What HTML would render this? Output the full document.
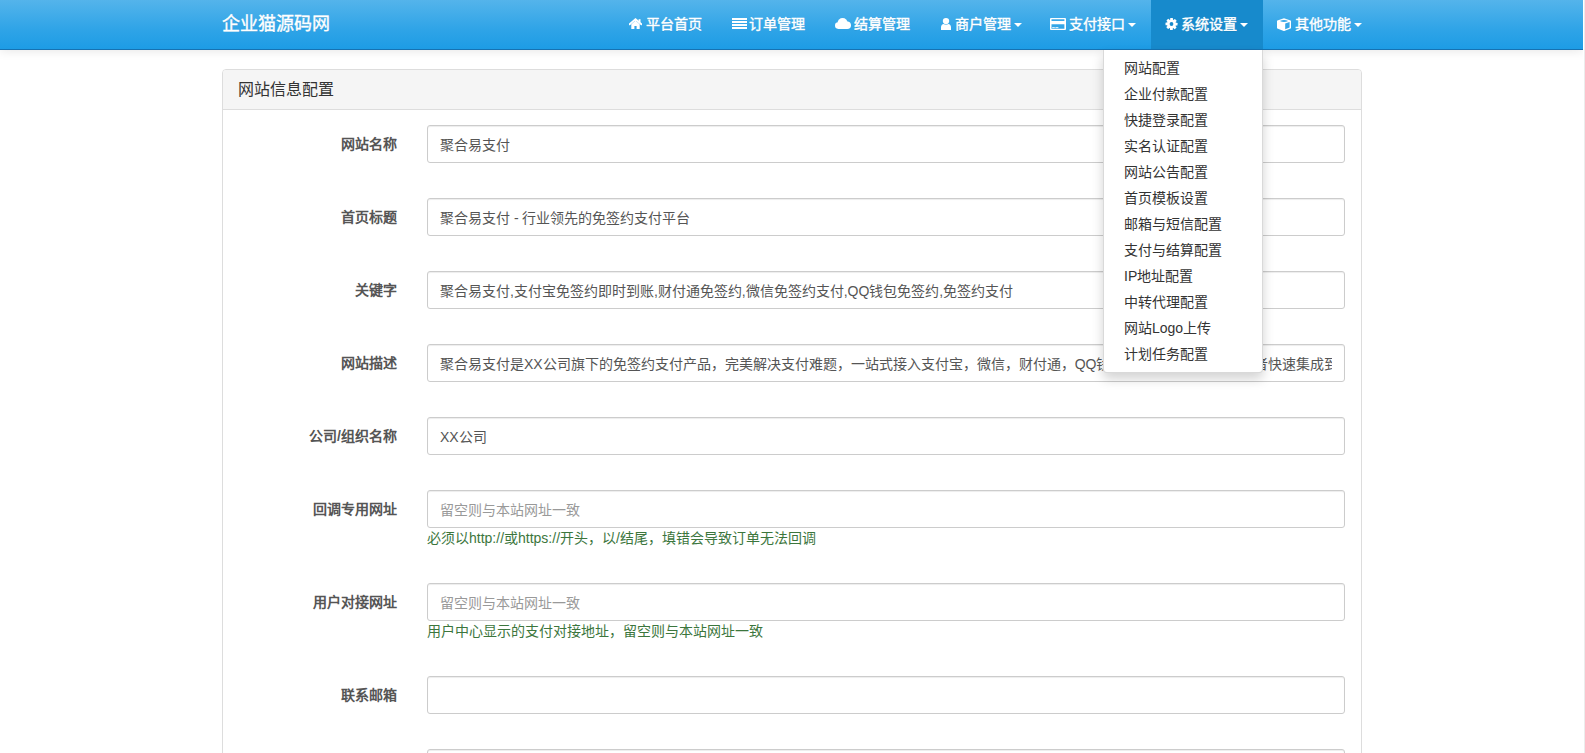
<!DOCTYPE html>
<html lang="zh-CN"><head><meta charset="utf-8">
<style>
*{box-sizing:border-box;margin:0;padding:0}
html,body{width:1585px;height:753px;overflow:hidden;background:#fff}
body{font-family:"Liberation Sans",sans-serif;font-size:14px;line-height:20px;color:#555;position:relative}
.nav{position:absolute;left:0;top:0;width:1583px;height:50px;background:linear-gradient(#54b4eb,#2fa4e7 60%,#1d9ce5);border-bottom:1px solid #1672b2;box-shadow:0 1px 10px rgba(0,0,0,.1);z-index:5}
.brand{position:absolute;left:222px;top:13.5px;font-size:18px;line-height:20px;color:#fff;text-shadow:0 1px 0 rgba(0,0,0,.1);-webkit-text-stroke:.35px #fff;white-space:nowrap}
.act{position:absolute;left:1151px;top:0;width:112px;height:49px;background:#178acc}
.nt{position:absolute;top:13.5px;line-height:20px;color:#fff;white-space:nowrap;text-shadow:0 1px 0 rgba(0,0,0,.1);-webkit-text-stroke:.4px #fff}
.car{position:absolute;top:22.5px;width:0;height:0;border-top:4px solid #fff;border-left:4px solid transparent;border-right:4px solid transparent}
svg.i{position:absolute;fill:#fff}
.panel{position:absolute;left:222px;top:69px;width:1140px;height:700px;border:1px solid #ddd;border-radius:4px;background:#fff}
.ph{height:40px;background:#f5f5f5;border-bottom:1px solid #ddd;padding:9px 15px;color:#333;font-size:16px;line-height:22px;border-radius:3px 3px 0 0}
.lbl{position:absolute;left:223px;width:174px;text-align:right;font-weight:bold;color:#555;line-height:20px}
.inp{position:absolute;left:427px;width:918px;height:38px;border:1px solid #ccc;border-radius:3px;padding:10px 12px 0;line-height:19px;color:#555;white-space:nowrap;overflow:hidden;box-shadow:inset 0 1px 1px rgba(0,0,0,.075);background:#fff}
.ph2{color:#999}
.help{position:absolute;left:427px;color:#3c763d;line-height:20px}
.dd{position:absolute;left:1103px;top:50px;width:160px;height:323px;background:#fff;border:1px solid rgba(0,0,0,.15);border-top:0;border-radius:0 0 4px 4px;box-shadow:0 6px 12px rgba(0,0,0,.175);padding:5px 0;z-index:6}
.dd div{padding:3px 20px;line-height:20px;color:#333;white-space:nowrap}
.sb{position:absolute;right:0;top:0;width:1px;height:753px;background:#ececec;z-index:9}.sb2{position:absolute;right:1px;top:0;width:1px;height:753px;background:#fff;z-index:9}
</style></head><body>
<div class="nav">
  <div class="brand">企业猫源码网</div>
  <div class="act"></div>
  <!-- home -->
  <svg class="i" style="left:629px;top:18px" width="13" height="11" viewBox="0 0 13 11"><path d="M0.6 6.2 L6.5 1.1 L12.4 6.2" fill="none" stroke="#fff" stroke-width="1.9" stroke-linecap="round" stroke-linejoin="round"/><rect x="9.6" y="1.2" width="1.9" height="3.4"/><path d="M2.3 6.2 L6.5 2.6 L10.7 6.2 V11 H7.6 V7.9 H5.4 V11 H2.3 Z"/></svg>
  <div class="nt" style="left:646px">平台首页</div>
  <!-- list -->
  <svg class="i" style="left:732px;top:18px" width="15" height="11" viewBox="0 0 15 11"><rect x="0" y="0" width="15" height="2"/><rect x="0" y="3" width="15" height="2"/><rect x="0" y="6" width="15" height="2"/><rect x="0" y="9" width="15" height="2"/></svg>
  <div class="nt" style="left:749px">订单管理</div>
  <!-- cloud -->
  <svg class="i" style="left:835px;top:18px" width="16" height="11" viewBox="0 0 16 11"><circle cx="3.3" cy="7.6" r="3.3"/><circle cx="7.6" cy="5" r="5"/><circle cx="12.2" cy="7.2" r="3.8"/><rect x="3.3" y="6" width="8.9" height="5"/></svg>
  <div class="nt" style="left:854px">结算管理</div>
  <!-- user -->
  <svg class="i" style="left:941px;top:18px" width="10" height="12" viewBox="0 0 10 12"><ellipse cx="5" cy="3.1" rx="3.2" ry="3.1"/><path d="M0 12 V9.4 C0 7.4 1.2 6.4 2.6 6.1 Q5 7.6 7.4 6.1 C8.8 6.4 10 7.4 10 9.4 V12 Z"/></svg>
  <div class="nt" style="left:955px">商户管理</div>
  <div class="car" style="left:1014px"></div>
  <!-- credit card -->
  <svg class="i" style="left:1050px;top:18px" width="16" height="12" viewBox="0 0 16 12"><path fill-rule="evenodd" d="M1 0 H15 Q16 0 16 1 V11 Q16 12 15 12 H1 Q0 12 0 11 V1 Q0 0 1 0 Z M1.5 1.3 V2.9 H14.4 V1.3 Z M1.5 6.2 V10.7 H14.4 V6.2 Z"/><rect x="2.2" y="9.2" width="2.6" height="0.9"/><rect x="5.4" y="9.2" width="3" height="0.9"/></svg>
  <div class="nt" style="left:1069px">支付接口</div>
  <div class="car" style="left:1128px"></div>
  <!-- cog -->
  <svg class="i" style="left:1165px;top:18px" width="13" height="12" viewBox="0 0 13 12"><mask id="gm"><rect width="13" height="12" fill="#fff"/><circle cx="6.5" cy="6" r="1.9" fill="#000"/></mask><g mask="url(#gm)"><rect x="5.20" y="0" width="2.8" height="2.6" rx="0.5" transform="rotate(0 6.5 6)"/><rect x="5.20" y="0" width="2.8" height="2.6" rx="0.5" transform="rotate(45 6.5 6)"/><rect x="5.20" y="0" width="2.8" height="2.6" rx="0.5" transform="rotate(90 6.5 6)"/><rect x="5.20" y="0" width="2.8" height="2.6" rx="0.5" transform="rotate(135 6.5 6)"/><rect x="5.20" y="0" width="2.8" height="2.6" rx="0.5" transform="rotate(180 6.5 6)"/><rect x="5.20" y="0" width="2.8" height="2.6" rx="0.5" transform="rotate(225 6.5 6)"/><rect x="5.20" y="0" width="2.8" height="2.6" rx="0.5" transform="rotate(270 6.5 6)"/><rect x="5.20" y="0" width="2.8" height="2.6" rx="0.5" transform="rotate(315 6.5 6)"/><circle cx="6.5" cy="6" r="4.5"/></g></svg>
  <div class="nt" style="left:1181px">系统设置</div>
  <div class="car" style="left:1240px"></div>
  <!-- cube -->
  <svg class="i" style="left:1277px;top:18px" width="14" height="13" viewBox="0 0 14 13"><path fill-rule="evenodd" d="M7 0.2 L13.6 2.4 Q14 2.6 14 3 V10 Q14 10.4 13.6 10.6 L7.3 12.9 Q7 13 6.7 12.9 L0.4 10.6 Q0 10.4 0 10 V3 Q0 2.6 0.4 2.4 Z M2.9 2.9 Q7 5 11.1 2.9 Q7 1 2.9 2.9 Z M8.2 5.5 V11.3 L12.6 9.6 V3.9 Z"/></svg>
  <div class="nt" style="left:1295px">其他功能</div>
  <div class="car" style="left:1354px"></div>
</div>
<div class="panel"><div class="ph">网站信息配置</div></div>

<div class="lbl" style="top:134px">网站名称</div>
<div class="inp" style="top:125px">聚合易支付</div>
<div class="lbl" style="top:207px">首页标题</div>
<div class="inp" style="top:198px">聚合易支付 - 行业领先的免签约支付平台</div>
<div class="lbl" style="top:280px">关键字</div>
<div class="inp" style="top:271px">聚合易支付,支付宝免签约即时到账,财付通免签约,微信免签约支付,QQ钱包免签约,免签约支付</div>
<div class="lbl" style="top:353px">网站描述</div>
<div class="inp" style="top:344px"><div style="width:892px;overflow:hidden">聚合易支付是XX公司旗下的免签约支付产品，完美解决支付难题，一站式接入支付宝，微信，财付通，QQ钱包，微信wap<span style="display:inline-block;width:0;margin-left:-8px"></span>，帮助开发者快速集成到自己相应产品，效率高，见效快，费率低！</div></div>
<div class="lbl" style="top:426px">公司/组织名称</div>
<div class="inp" style="top:417px">XX公司</div>
<div class="lbl" style="top:499px">回调专用网址</div>
<div class="inp ph2" style="top:490px">留空则与本站网址一致</div>
<div class="help" style="top:528px">必须以http://或https://开头，以/结尾，填错会导致订单无法回调</div>
<div class="lbl" style="top:592px">用户对接网址</div>
<div class="inp ph2" style="top:583px">留空则与本站网址一致</div>
<div class="help" style="top:621px">用户中心显示的支付对接地址，留空则与本站网址一致</div>
<div class="lbl" style="top:685px">联系邮箱</div>
<div class="inp" style="top:676px"></div>
<div class="inp" style="top:749px"></div>

<div class="dd">
  <div>网站配置</div><div>企业付款配置</div><div>快捷登录配置</div><div>实名认证配置</div>
  <div>网站公告配置</div><div>首页模板设置</div><div>邮箱与短信配置</div><div>支付与结算配置</div>
  <div>IP地址配置</div><div>中转代理配置</div><div>网站Logo上传</div><div>计划任务配置</div>
</div>
<div class="sb2"></div><div class="sb"></div>
</body></html>
